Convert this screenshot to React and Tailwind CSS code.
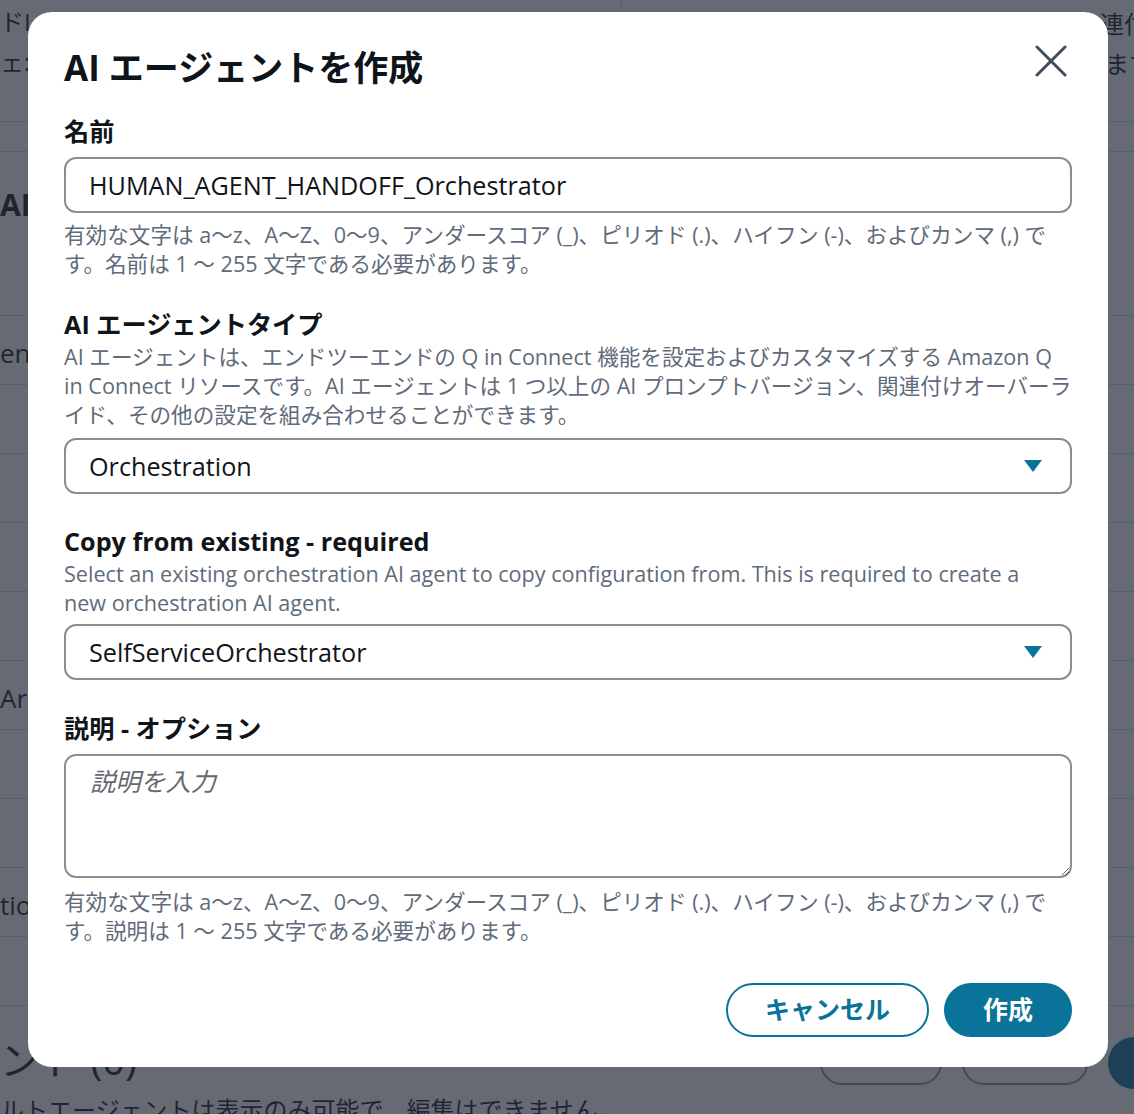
import { useState } from "react";

const font = "font-['Open_Sans','Noto_Sans_CJK_JP',sans-serif]";

const Caret = () => (
  <svg width="20" height="14" viewBox="0 0 20 14" className="shrink-0">
    <path d="M1 1 H19 L10 13 Z" fill="#0a7399" />
  </svg>
);

const CloseIcon = () => (
  <svg width="32" height="32" viewBox="0 0 32 32">
    <path d="M2 2 L30 30 M30 2 L2 30" stroke="#414d5c" strokeWidth="3" strokeLinecap="round" />
  </svg>
);

const Help = ({ children, className = "" }) => (
  <p className={`text-[21.6px] leading-[29px] text-[#5f6b7a] ${className}`}>{children}</p>
);

const Label = ({ children, className = "" }) => (
  <h3 className={`text-[25.2px] leading-[30px] font-bold text-[#0f141a] whitespace-nowrap ${className}`}>{children}</h3>
);

const SelectBox = ({ value, className = "" }) => (
  <button
    type="button"
    className={`w-full h-[56px] shrink-0 border-2 border-[#8c8c94] rounded-[12px] pl-[23px] pr-[27px] flex items-center justify-between text-[25.2px] text-[#0f141a] bg-white ${className}`}
  >
    <span className="pt-[1px]">{value}</span>
    <Caret />
  </button>
);

const BackgroundPage = () => {
  const rows = ["ent", "", "", "", "", "Ar", "", "", "tion", ""];
  return (
    <div className="w-full h-full bg-white text-[#16191f] flex flex-col">
      <div className="h-[122px] shrink-0 grid grid-cols-[622px_1fr] border-b border-[#d5dbdb]">
        <div className="border-r border-[#d5dbdb] text-[24px] leading-[40px] pt-[2px] whitespace-nowrap">
          <p>ドI</p>
          <p>ェ:</p>
        </div>
        <div className="text-[24px] leading-[40px] pt-[4px] pl-[478px] whitespace-nowrap">
          <p>連付け</p>
          <p className="ml-[5px]">ます</p>
        </div>
      </div>
      <div className="h-[30px] shrink-0 border-b border-[#d5dbdb]" />
      <div className="h-[163px] shrink-0 pt-[33px]">
        <h2 className="text-[30px] font-bold leading-[40px] whitespace-nowrap">AI Agents</h2>
      </div>
      {rows.map((r, i) => (
        <div
          key={i}
          className="h-[69px] shrink-0 border-t border-[#d5dbdb] flex items-center pt-[6px] text-[26px] whitespace-nowrap"
        >
          {r}
        </div>
      ))}
      <div className="border-t border-[#d5dbdb] shrink-0 flex flex-col">
        <div className="flex items-center justify-between mt-[25px]">
          <h2 className="text-[40px] leading-[50px] whitespace-nowrap">ント (0)</h2>
          <div className="flex items-center gap-[20px] mr-[-26px] mt-[6px]">
            <div className="w-[122px] h-[44px] rounded-full border-2 border-[#8c8c94]" />
            <div className="w-[126px] h-[44px] rounded-full border-2 border-[#8c8c94]" />
            <div className="w-[52px] h-[52px] rounded-full bg-[#0a7399]" />
          </div>
        </div>
        <p className="text-[24px] leading-[34px] mt-[4px] whitespace-nowrap">
          ルトエージェントは表示のみ可能で、編集はできません。
        </p>
      </div>
    </div>
  );
};

const App = () => {
  const [name, setName] = useState("HUMAN_AGENT_HANDOFF_Orchestrator");

  return (
    <div className={`relative w-[1134px] h-[1114px] overflow-hidden ${font}`}>
      <BackgroundPage />
      <div className="absolute inset-0 bg-[#232b37]/70">
        <div className="ml-[28px] mt-[12px] w-[1080px] h-[1055px] bg-white rounded-[24px] px-[36px] pt-[34px] flex flex-col">
          <div className="flex items-start justify-between">
            <h2 className="text-[35px] leading-[44px] font-bold text-[#0f141a] whitespace-nowrap">AI エージェントを作成</h2>
            <button type="button" className="mt-[-1px] mr-[5px]" aria-label="閉じる">
              <CloseIcon />
            </button>
          </div>

          <Label className="mt-[26px]">名前</Label>
          <input
            value={name}
            onChange={(e) => setName(e.target.value)}
            className="mt-[11px] w-full h-[56px] shrink-0 border-2 border-[#8c8c94] rounded-[12px] px-[23px] text-[25.2px] text-[#0f141a] outline-none"
          />
          <Help className="mt-[7px]">
            有効な文字は a〜z、A〜Z、0〜9、アンダースコア (_)、ピリオド (.)、ハイフン (-)、およびカンマ (,) で<br />
            す。名前は 1 〜 255 文字である必要があります。
          </Help>

          <Label className="mt-[31px]">AI エージェントタイプ</Label>
          <Help className="mt-[3px]">
            AI エージェントは、エンドツーエンドの Q in Connect 機能を設定およびカスタマイズする Amazon Q<br />
            in Connect リソースです。AI エージェントは 1 つ以上の AI プロンプトバージョン、関連付けオーバーラ<br />
            イド、その他の設定を組み合わせることができます。
          </Help>
          <SelectBox value="Orchestration" className="mt-[9px]" />

          <Label className="mt-[32px]">Copy from existing - required</Label>
          <Help className="mt-[3px]">
            Select an existing orchestration AI agent to copy configuration from. This is required to create a<br />
            new orchestration AI agent.
          </Help>
          <SelectBox value="SelfServiceOrchestrator" className="mt-[7px]" />

          <Label className="mt-[33px]">説明 - オプション</Label>
          <textarea
            placeholder="説明を入力"
            className="mt-[11px] w-full h-[124px] shrink-0 border-2 border-[#8c8c94] rounded-[12px] px-[24px] py-[11px] text-[25.2px] leading-[29px] text-[#0f141a] placeholder:italic placeholder:text-[#656871] outline-none"
          />
          <Help className="mt-[9px]">
            有効な文字は a〜z、A〜Z、0〜9、アンダースコア (_)、ピリオド (.)、ハイフン (-)、およびカンマ (,) で<br />
            す。説明は 1 〜 255 文字である必要があります。
          </Help>

          <div className="mt-[38px] flex justify-end gap-[15px]">
            <button
              type="button"
              className="w-[203px] h-[54px] rounded-full border-2 border-[#0a7399] text-[#0a7399] text-[25px] font-bold"
            >
              キャンセル
            </button>
            <button
              type="button"
              className="w-[128px] h-[54px] rounded-full bg-[#0a7399] text-white text-[25px] font-bold"
            >
              作成
            </button>
          </div>
        </div>
      </div>
    </div>
  );
};

export default App;
